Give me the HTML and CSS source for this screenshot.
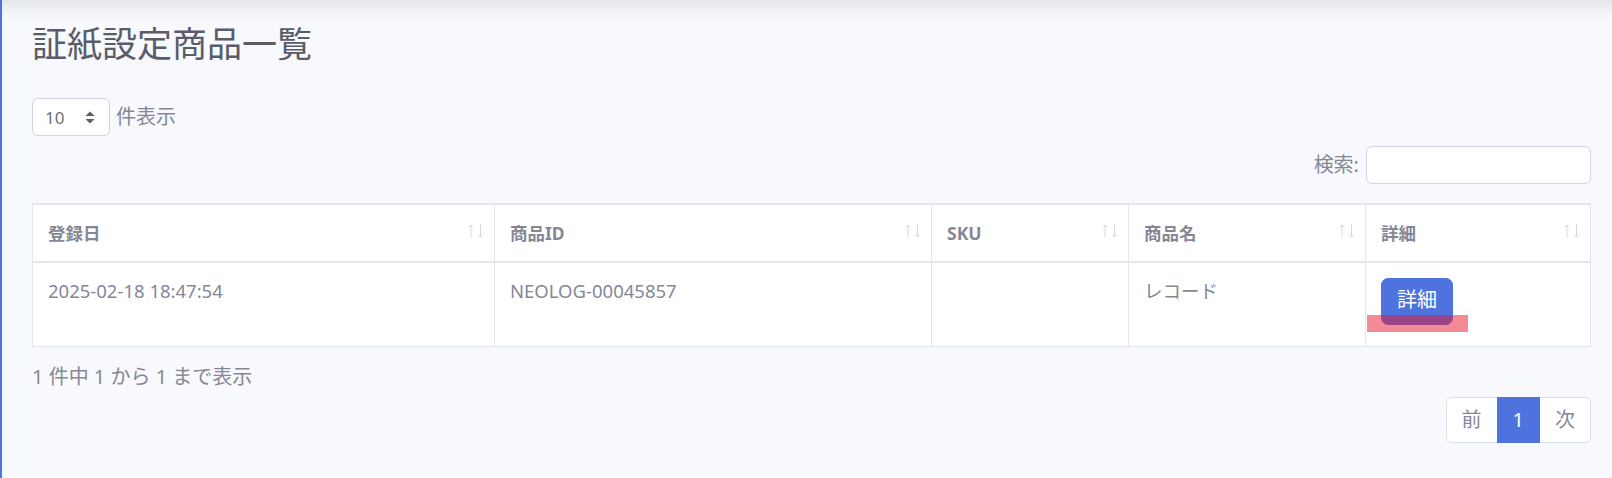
FILE: index.html
```html
<!DOCTYPE html>
<html lang="ja">
<head>
<meta charset="utf-8">
<title>証紙設定商品一覧</title>
<link rel="stylesheet" href="styles.css">
</head>
<body>
<div class="page">
  <main class="content">
    <h1 class="page-title">証紙設定商品一覧</h1>

    <div class="dt-length">
      <div class="select-box">
        <span>10</span>
        <svg class="select-arrows" width="10" height="13" viewBox="0 0 10 13"><path d="M5 0.5 L9.5 5 L0.5 5 Z" fill="#5a5c69"/><path d="M0.5 8 L9.5 8 L5 12.5 Z" fill="#5a5c69"/></svg>
      </div>
      <span class="dt-label">件表示</span>
    </div>

    <div class="dt-filter">
      <label class="dt-label">検索:<input type="search" class="search-input"></label>
    </div>

    <table class="data-table">
      <colgroup>
        <col class="col-date">
        <col class="col-id">
        <col class="col-sku">
        <col class="col-name">
        <col>
      </colgroup>
      <thead>
        <tr>
          <th><div class="th-inner"><span>登録日</span><svg class="sort" width="16" height="14" viewBox="0 0 16 14"><path d="M3 13.5V1M0.5 3.5L3 1L5.5 3.5M12.5 0.5V13M10 10.5L12.5 13L15 10.5" fill="none" stroke="#d5d7df" stroke-width="1"/></svg></div></th>
          <th><div class="th-inner"><span>商品ID</span><svg class="sort" width="16" height="14" viewBox="0 0 16 14"><path d="M3 13.5V1M0.5 3.5L3 1L5.5 3.5M12.5 0.5V13M10 10.5L12.5 13L15 10.5" fill="none" stroke="#d5d7df" stroke-width="1"/></svg></div></th>
          <th><div class="th-inner"><span>SKU</span><svg class="sort" width="16" height="14" viewBox="0 0 16 14"><path d="M3 13.5V1M0.5 3.5L3 1L5.5 3.5M12.5 0.5V13M10 10.5L12.5 13L15 10.5" fill="none" stroke="#d5d7df" stroke-width="1"/></svg></div></th>
          <th><div class="th-inner"><span>商品名</span><svg class="sort" width="16" height="14" viewBox="0 0 16 14"><path d="M3 13.5V1M0.5 3.5L3 1L5.5 3.5M12.5 0.5V13M10 10.5L12.5 13L15 10.5" fill="none" stroke="#d5d7df" stroke-width="1"/></svg></div></th>
          <th><div class="th-inner"><span>詳細</span><svg class="sort" width="16" height="14" viewBox="0 0 16 14"><path d="M3 13.5V1M0.5 3.5L3 1L5.5 3.5M12.5 0.5V13M10 10.5L12.5 13L15 10.5" fill="none" stroke="#d5d7df" stroke-width="1"/></svg></div></th>
        </tr>
      </thead>
      <tbody>
        <tr>
          <td>2025-02-18 18:47:54</td>
          <td>NEOLOG-00045857</td>
          <td></td>
          <td>レコード</td>
          <td class="action-cell"><a class="btn" href="#">詳細</a><span class="highlight"></span></td>
        </tr>
      </tbody>
    </table>

    <div class="dt-info">1 件中 1 から 1 まで表示</div>

    <ul class="pagination">
      <li class="page-item disabled"><span class="page-link">前</span></li>
      <li class="page-item active"><span class="page-link">1</span></li>
      <li class="page-item disabled"><span class="page-link">次</span></li>
    </ul>
  </main>
</div>
</body>
</html>
```

FILE: styles.css
```css
* {
  box-sizing: border-box;
}

html,
body {
  margin: 0;
  padding: 0;
}

body {
  font-family: "Noto Sans", "Noto Sans CJK JP", sans-serif;
  color: #858796;
  background: #f8f9fc;
}

.page {
  min-height: 100vh;
  border-left: 2px solid #4e73df;
  background: linear-gradient(to bottom, #e5e6ea 0, #eceef2 7px, #f4f5f9 15px, #f8f9fc 24px);
}

.content {
  padding: 23px 21px 20px 30px;
}

.page-title {
  margin: 0;
  font-size: 35px;
  line-height: 42px;
  font-weight: 400;
  color: #5a5c69;
}

.dt-length {
  margin-top: 33px;
  display: flex;
  align-items: center;
  gap: 6px;
}

.select-box {
  width: 78px;
  height: 38px;
  border: 1px solid #d1d3e2;
  border-radius: 6px;
  background: #fff;
  display: flex;
  align-items: center;
  justify-content: space-between;
  padding: 0 14px 0 12px;
  font-size: 17px;
  color: #6e707e;
}

.select-arrows {
  display: block;
}

.dt-label {
  font-size: 20px;
  line-height: 30px;
  color: #858796;
}

.dt-filter {
  margin-top: 10px;
  display: flex;
  justify-content: flex-end;
}

.dt-filter label {
  display: flex;
  align-items: center;
}

.search-input {
  margin-left: 7px;
  width: 225px;
  height: 38px;
  border: 1px solid #d1d3e2;
  border-radius: 6px;
  background: #fff;
  padding: 0 10px;
  font-family: inherit;
  font-size: 17.5px;
  color: #6e707e;
  outline: none;
}

.data-table {
  margin-top: 19px;
  width: 100%;
  table-layout: fixed;
  border-collapse: separate;
  border-spacing: 0;
  border: 1px solid #e3e6f0;
  background: #fff;
}

.col-date { width: 462px; }
.col-id { width: 437px; }
.col-sku { width: 197px; }
.col-name { width: 237px; }

.data-table th {
  border-top: 1px solid #e3e6f0;
  border-right: 1px solid #e3e6f0;
  border-bottom: 2px solid #e3e6f0;
  padding: 15px 10px 15px 15px;
  text-align: left;
  font-size: 17.5px;
  line-height: 26.25px;
  font-weight: 700;
  color: #858796;
}

.data-table td {
  border-right: 1px solid #e3e6f0;
  padding: 15px;
  vertical-align: top;
  text-align: left;
  font-size: 18.5px;
  line-height: 26.25px;
  color: #858796;
}

.data-table th:last-child,
.data-table td:last-child {
  border-right: 0;
}

.th-inner {
  display: flex;
  justify-content: space-between;
  align-items: flex-start;
}

.sort {
  flex: none;
  display: block;
  margin-top: 4px;
}

.action-cell {
  position: relative;
}

.btn {
  display: inline-block;
  vertical-align: top;
  margin-bottom: 6px;
  padding: 6px 15px 9px;
  font-size: 20px;
  line-height: 30px;
  color: #fff;
  background: #4e73df;
  border: 1px solid #4e73df;
  border-radius: 7px;
  text-decoration: none;
}

.highlight {
  position: absolute;
  left: 1px;
  top: 52px;
  width: 101px;
  height: 17px;
  background: rgba(229, 24, 46, 0.5);
}

.dt-info {
  margin-top: 15px;
  font-size: 20px;
  line-height: 30px;
  color: #858796;
}

.pagination {
  list-style: none;
  margin: 5px 0 0;
  padding: 0;
  display: flex;
  justify-content: flex-end;
}

.page-link {
  display: block;
  padding: 10px 15px;
  font-size: 20px;
  line-height: 24px;
  border: 1px solid #dddfeb;
  background: #fff;
  color: #858796;
  margin-left: -1px;
}

.page-item:first-child .page-link {
  margin-left: 0;
  border-radius: 6px 0 0 6px;
}

.page-item:last-child .page-link {
  border-radius: 0 6px 6px 0;
}

.page-item.active .page-link {
  position: relative;
  z-index: 1;
  background: #4e73df;
  border-color: #4e73df;
  color: #fff;
}
```
